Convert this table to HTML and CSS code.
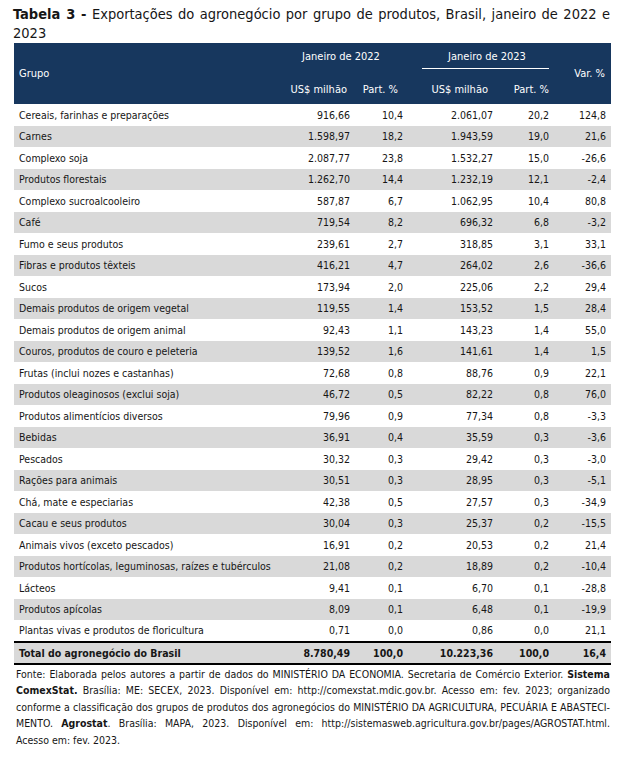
FILE: index.html
```html
<!DOCTYPE html>
<html lang="pt-BR">
<head>
<meta charset="utf-8">
<title>Tabela 3</title>
<link rel="stylesheet" href="styles.css">
</head>
<body>
<div class="page">
  <div class="title">
    <div class="title-line"><b>Tabela 3 -</b> Exportações do agronegócio por grupo de produtos, Brasil, janeiro de 2022 e</div>
    <div class="title-end">2023</div>
  </div>
  <table class="data">
    <colgroup>
      <col class="c-name"><col class="c-v1"><col class="c-p1"><col class="c-v2"><col class="c-p2"><col class="c-var">
    </colgroup>
    <thead>
      <tr class="h1">
        <th rowspan="2" class="th-grupo">Grupo</th>
        <th colspan="2" class="th-y1"><div class="yr">Janeiro de 2022</div></th>
        <th colspan="2" class="th-y2"><div class="yr yr-line">Janeiro de 2023</div></th>
        <th rowspan="2" class="th-var">Var. %</th>
      </tr>
      <tr class="h2">
        <th class="th-v1">US$ milhão</th>
        <th class="th-p1">Part. %</th>
        <th class="th-v2">US$ milhão</th>
        <th class="th-p2">Part. %</th>
      </tr>
    </thead>
    <tbody>
      <tr><td>Cereais, farinhas e preparações</td><td>916,66</td><td>10,4</td><td>2.061,07</td><td>20,2</td><td>124,8</td></tr>
      <tr><td>Carnes</td><td>1.598,97</td><td>18,2</td><td>1.943,59</td><td>19,0</td><td>21,6</td></tr>
      <tr><td>Complexo soja</td><td>2.087,77</td><td>23,8</td><td>1.532,27</td><td>15,0</td><td>-26,6</td></tr>
      <tr><td>Produtos florestais</td><td>1.262,70</td><td>14,4</td><td>1.232,19</td><td>12,1</td><td>-2,4</td></tr>
      <tr><td>Complexo sucroalcooleiro</td><td>587,87</td><td>6,7</td><td>1.062,95</td><td>10,4</td><td>80,8</td></tr>
      <tr><td>Café</td><td>719,54</td><td>8,2</td><td>696,32</td><td>6,8</td><td>-3,2</td></tr>
      <tr><td>Fumo e seus produtos</td><td>239,61</td><td>2,7</td><td>318,85</td><td>3,1</td><td>33,1</td></tr>
      <tr><td>Fibras e produtos têxteis</td><td>416,21</td><td>4,7</td><td>264,02</td><td>2,6</td><td>-36,6</td></tr>
      <tr><td>Sucos</td><td>173,94</td><td>2,0</td><td>225,06</td><td>2,2</td><td>29,4</td></tr>
      <tr><td>Demais produtos de origem vegetal</td><td>119,55</td><td>1,4</td><td>153,52</td><td>1,5</td><td>28,4</td></tr>
      <tr><td>Demais produtos de origem animal</td><td>92,43</td><td>1,1</td><td>143,23</td><td>1,4</td><td>55,0</td></tr>
      <tr><td>Couros, produtos de couro e peleteria</td><td>139,52</td><td>1,6</td><td>141,61</td><td>1,4</td><td>1,5</td></tr>
      <tr><td>Frutas (inclui nozes e castanhas)</td><td>72,68</td><td>0,8</td><td>88,76</td><td>0,9</td><td>22,1</td></tr>
      <tr><td>Produtos oleaginosos (exclui soja)</td><td>46,72</td><td>0,5</td><td>82,22</td><td>0,8</td><td>76,0</td></tr>
      <tr><td>Produtos alimentícios diversos</td><td>79,96</td><td>0,9</td><td>77,34</td><td>0,8</td><td>-3,3</td></tr>
      <tr><td>Bebidas</td><td>36,91</td><td>0,4</td><td>35,59</td><td>0,3</td><td>-3,6</td></tr>
      <tr><td>Pescados</td><td>30,32</td><td>0,3</td><td>29,42</td><td>0,3</td><td>-3,0</td></tr>
      <tr><td>Rações para animais</td><td>30,51</td><td>0,3</td><td>28,95</td><td>0,3</td><td>-5,1</td></tr>
      <tr><td>Chá, mate e especiarias</td><td>42,38</td><td>0,5</td><td>27,57</td><td>0,3</td><td>-34,9</td></tr>
      <tr><td>Cacau e seus produtos</td><td>30,04</td><td>0,3</td><td>25,37</td><td>0,2</td><td>-15,5</td></tr>
      <tr><td>Animais vivos (exceto pescados)</td><td>16,91</td><td>0,2</td><td>20,53</td><td>0,2</td><td>21,4</td></tr>
      <tr><td>Produtos hortícolas, leguminosas, raízes e tubérculos</td><td>21,08</td><td>0,2</td><td>18,89</td><td>0,2</td><td>-10,4</td></tr>
      <tr><td>Lácteos</td><td>9,41</td><td>0,1</td><td>6,70</td><td>0,1</td><td>-28,8</td></tr>
      <tr><td>Produtos apícolas</td><td>8,09</td><td>0,1</td><td>6,48</td><td>0,1</td><td>-19,9</td></tr>
      <tr><td>Plantas vivas e produtos de floricultura</td><td>0,71</td><td>0,0</td><td>0,86</td><td>0,0</td><td>21,1</td></tr>
    </tbody>
    <tfoot>
      <tr class="total"><td>Total do agronegócio do Brasil</td><td>8.780,49</td><td>100,0</td><td>10.223,36</td><td>100,0</td><td>16,4</td></tr>
    </tfoot>
  </table>
  <div class="source">
    <span class="src-line">Fonte: Elaborada pelos autores a partir de dados do MINISTÉRIO DA ECONOMIA. Secretaria de Comércio Exterior. <b>Sistema</b></span>
    <span class="src-line"><b>ComexStat.</b> Brasília: ME: SECEX, 2023. Disponível em: http://comexstat.mdic.gov.br. Acesso em: fev. 2023; organizado</span>
    <span class="src-line">conforme a classificação dos grupos de produtos dos agronegócios do MINISTÉRIO DA AGRICULTURA, PECUÁRIA E ABASTECI-</span>
    <span class="src-line">MENTO. <b>Agrostat</b>. Brasília: MAPA, 2023. Disponível em: http://sistemasweb.agricultura.gov.br/pages/AGROSTAT.html.</span>
    <span class="src-last">Acesso em: fev. 2023.</span>
  </div>
</div>
</body>
</html>
```

FILE: styles.css
```css
* { box-sizing: border-box; }
html, body { margin: 0; padding: 0; background: #ffffff; }
body {
  font-family: "DejaVu Sans Condensed", "DejaVu Sans", sans-serif;
  font-stretch: condensed;
  color: #161616;
}
.page {
  width: 623px;
  padding: 5px 13px 0 13px;
}
.title {
  font-size: 14.5px;
  line-height: 19px;
  color: #161616;
}
.title-line {
  text-align: justify;
  text-align-last: justify;
  white-space: nowrap;
}
.data {
  width: 597px;
  margin-left: 1px;
  border-collapse: collapse;
  table-layout: fixed;
  font-size: 10.5px;
}
.c-name { width: 276px; }
.c-v1 { width: 60px; }
.c-p1 { width: 53px; }
.c-v2 { width: 90px; }
.c-p2 { width: 56px; }
.c-var { width: 62px; }

.data th, .data td { padding: 0; font-weight: normal; white-space: nowrap; }
.data thead th {
  background: #17375e;
  color: #ffffff;
  font-size: 11px;
}
.h1 { height: 26px; }
.h2 { height: 35px; }
.data .th-grupo { text-align: left; padding-left: 5px; vertical-align: middle; }
.data .th-var { text-align: right; padding-right: 6px; vertical-align: middle; }
.data .th-y1, .data .th-y2 { vertical-align: bottom; text-align: center; }
.data .th-y1 { padding-right: 11px; }
.yr { line-height: 13px; padding-bottom: 6px; }
.yr-line {
  margin-left: 19px;
  margin-right: -3px;
  padding-bottom: 5px;
  border-bottom: 1px solid #ffffff;
}
.data .h2 th { text-align: right; vertical-align: middle; padding-top: 5px; }
.data .h2 .th-v1 { padding-right: 3px; }
.data .h2 .th-p1 { padding-right: 5px; }
.data .h2 .th-v2 { padding-right: 5px; }
.data .h2 .th-p2 { padding-right: 0; }

.data tbody tr { height: 21.5px; }
.data tbody tr:nth-child(even) { background: #d9d9d9; }
.data td { text-align: right; vertical-align: middle; }
.data td:first-child { text-align: left; padding-left: 5px; }
.data td:last-child { padding-right: 5px; }

.total {
  height: 22px;
  background: #d9d9d9;
  border-top: 2px solid #000000;
  border-bottom: 2px solid #000000;
}
.total td { font-weight: bold; }

.source {
  font-size: 10.5px;
  line-height: 16.6px;
  padding-top: 1px;
  padding-left: 3px;
  color: #161616;
}
.src-line {
  display: block;
  text-align: justify;
  text-align-last: justify;
  white-space: nowrap;
}
.src-last { display: block; }
```
